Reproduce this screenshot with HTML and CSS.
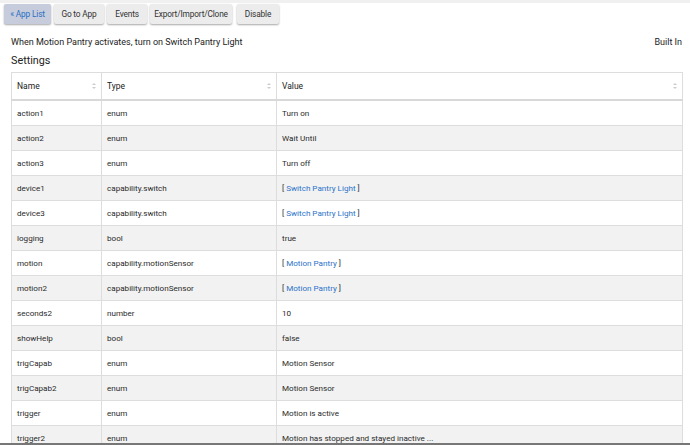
FILE: index.html
```html
<!DOCTYPE html>
<html>
<head>
<meta charset="utf-8">
<link rel="stylesheet" href="styles.css">
</head>
<body>
<div class="page">
  <div class="toolbar">
    <button class="btn btn-primary w-list">« App List</button>
    <button class="btn w-app">Go to App</button>
    <button class="btn w-events">Events</button>
    <button class="btn w-export">Export/Import/Clone</button>
    <button class="btn w-disable">Disable</button>
  </div>
  <div class="titlebar">
    <span>When Motion Pantry activates, turn on Switch Pantry Light</span>
    <span>Built In</span>
  </div>
  <div class="section">Settings</div>
  <table class="grid">
    <thead>
      <tr>
        <th class="c-name">Name<span class="sort"></span></th>
        <th class="c-type">Type<span class="sort"></span></th>
        <th>Value<span class="sort"></span></th>
      </tr>
    </thead>
    <tbody>
      <tr><td>action1</td><td>enum</td><td>Turn on</td></tr>
      <tr><td>action2</td><td>enum</td><td>Wait Until</td></tr>
      <tr><td>action3</td><td>enum</td><td>Turn off</td></tr>
      <tr><td>device1</td><td>capability.switch</td><td>[ <a class="lnk">Switch Pantry Light</a> ]</td></tr>
      <tr><td>device3</td><td>capability.switch</td><td>[ <a class="lnk">Switch Pantry Light</a> ]</td></tr>
      <tr><td>logging</td><td>bool</td><td>true</td></tr>
      <tr><td>motion</td><td>capability.motionSensor</td><td>[ <a class="lnk">Motion Pantry</a> ]</td></tr>
      <tr><td>motion2</td><td>capability.motionSensor</td><td>[ <a class="lnk">Motion Pantry</a> ]</td></tr>
      <tr><td>seconds2</td><td>number</td><td>10</td></tr>
      <tr><td>showHelp</td><td>bool</td><td>false</td></tr>
      <tr><td>trigCapab</td><td>enum</td><td>Motion Sensor</td></tr>
      <tr><td>trigCapab2</td><td>enum</td><td>Motion Sensor</td></tr>
      <tr><td>trigger</td><td>enum</td><td>Motion is active</td></tr>
      <tr><td>trigger2</td><td>enum</td><td>Motion has stopped and stayed inactive ...</td></tr>
    </tbody>
  </table>
</div>
</body>
</html>
```
FILE: styles.css
```css
html, body {
  margin: 0;
  padding: 0;
  background: #fff;
  height: 445px;
  overflow: hidden;
}
body {
  font-family: Roboto, "Liberation Sans", sans-serif;
  color: #222;
  border-top: 3px solid #f0f0f0;
  box-sizing: border-box;
  position: relative;
}
body::after {
  content: "";
  position: absolute;
  left: 0;
  right: 0;
  bottom: 0;
  height: 2px;
  background: #777;
}
.page {
  padding: 1px 8px 0 11px;
}
.toolbar {
  display: flex;
  gap: 3px;
  margin-left: -7px;
  height: 21px;
}
.btn {
  font-family: Roboto, "Liberation Sans", sans-serif;
  font-size: 8.3px;
  letter-spacing: -0.15px;
  color: #333;
  background: #ececec;
  border: none;
  border-radius: 2px;
  box-shadow: 0 1px 2px rgba(0,0,0,0.35);
  padding: 0;
  height: 20px;
  margin: 0;
  text-align: center;
  white-space: nowrap;
}
.w-list { width: 47px; }
.w-app { width: 50px; }
.w-events { width: 40px; }
.w-export { width: 82px; margin-right: 2px; }
.w-disable { width: 42px; }
.btn-primary {
  background: #c6ccdb;
  color: #2a6fc4;
}
.titlebar {
  display: flex;
  justify-content: space-between;
  font-size: 9px;
  margin-top: 9px;
  height: 16px;
  line-height: 16px;
}
.section {
  font-size: 10.8px;
  margin-top: 3px;
  line-height: 16px;
  height: 16px;
}
.grid {
  margin-top: 3px;
  width: 672px;
  border-collapse: collapse;
  table-layout: fixed;
  font-size: 8.1px;
}
.grid th, .grid td {
  border: 1px solid #ddd;
  text-align: left;
  padding: 0 5px 0 5px;
  white-space: nowrap;
  overflow: hidden;
}
.grid th {
  font-weight: normal;
  font-size: 8.5px;
  height: 26px;
  border-bottom: 2px solid #d8d8d8;
  position: relative;
  color: #222;
}
.grid td {
  height: 24px;
  color: #2a2a2a;
}
.c-name { width: 79px; }
.c-type { width: 164px; }
.grid tbody tr:nth-child(even) td { background: #f2f2f2; }
.sort {
  position: absolute;
  right: 7px;
  top: 10px;
  width: 0;
  height: 7px;
}
.sort::before, .sort::after {
  content: "";
  position: absolute;
  left: -2px;
  border-left: 2px solid transparent;
  border-right: 2px solid transparent;
}
.sort::before { top: 0; border-bottom: 2px solid #ccc; }
.sort::after { top: 4px; border-top: 2px solid #ccc; }
.lnk { color: #2a73c9; text-decoration: none; }
```
